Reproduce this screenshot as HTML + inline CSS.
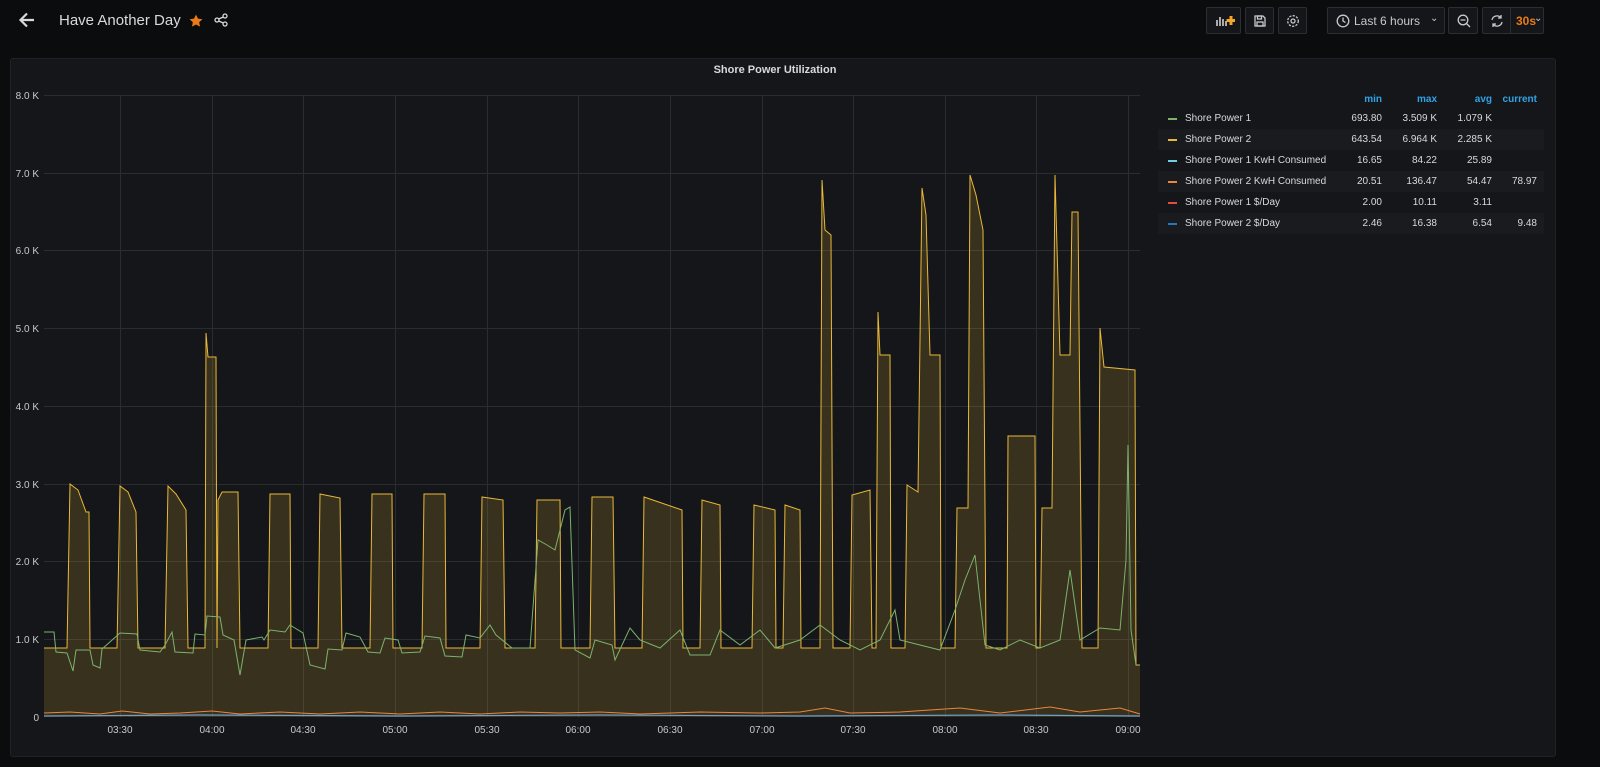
<!DOCTYPE html>
<html><head><meta charset="utf-8"><style>
*{margin:0;padding:0;box-sizing:border-box}
body{width:1600px;height:767px;background:#0b0c0e;font-family:"Liberation Sans",sans-serif;color:#d8d9da;overflow:hidden;position:relative}
.btn{position:absolute;top:7px;height:27px;border:1px solid #2c2e33;background:#141619;border-radius:2px}
.panel{position:absolute;left:10px;top:58px;width:1546px;height:699px;background:#141619;border:1px solid #202226;border-radius:3px}
.leg{position:absolute;left:1158px;font-size:10px;width:386px;height:21px;line-height:21px}
.leg span{position:absolute;text-align:right}
.leg .n{left:27px;text-align:left}
.leg i{position:absolute;left:10px;top:10px;width:9px;height:1.5px}
.alt{background:#191b1f}
</style></head><body>
<svg style="position:absolute;left:18px;top:11px" width="18" height="18" viewBox="0 0 18 18"><path d="M16 9H3M9 2.5L2.5 9 9 15.5" stroke="#d8d9da" stroke-width="2.2" fill="none"/></svg>
<div style="position:absolute;left:59px;top:12px;font-size:15px;color:#d8d9da">Have Another Day</div>
<svg style="position:absolute;left:189px;top:14px" width="14" height="14" viewBox="0 0 24 24"><path d="M12 1l3.4 7 7.6.9-5.6 5.2 1.5 7.6L12 18l-6.9 3.7 1.5-7.6L1 8.9 8.6 8z" fill="#eb7b18"/></svg>
<svg style="position:absolute;left:214px;top:13px" width="14" height="14" viewBox="0 0 14 14" fill="none" stroke="#d8d9da" stroke-width="1.3"><circle cx="3" cy="7" r="2"/><circle cx="11" cy="3" r="2"/><circle cx="11" cy="11" r="2"/><path d="M4.8 6l4.4-2M4.8 8l4.4 2"/></svg>
<div class="btn" style="left:1206px;width:35px"><svg style="position:absolute;left:8px;top:6px" width="20" height="14"><rect x="1" y="6" width="2" height="6" fill="#aaa"/><rect x="4" y="3" width="2" height="9" fill="#aaa"/><rect x="7" y="5" width="2" height="7" fill="#aaa"/><rect x="10" y="7" width="2" height="5" fill="#aaa"/><path d="M16 2v9M11.5 6.5h9" stroke="#f5a623" stroke-width="3"/></svg></div>
<div class="btn" style="left:1245px;width:29px"><svg style="position:absolute;left:7px;top:6px" width="14" height="14" fill="none" stroke="#c8c9ca" stroke-width="1.3"><path d="M2 2h8l2 2v8H2z"/><rect x="4.5" y="2" width="4" height="3"/><rect x="4" y="8" width="6" height="4"/></svg></div>
<div class="btn" style="left:1278px;width:29px"><svg style="position:absolute;left:7px;top:6px" width="14" height="14" fill="none" stroke="#c8c9ca" stroke-width="1.3"><circle cx="7" cy="7" r="2"/><circle cx="7" cy="7" r="5.3" stroke-dasharray="2.2 1.3"/></svg></div>
<div class="btn" style="left:1327px;width:118px"><svg style="position:absolute;left:8px;top:6px" width="14" height="14" fill="none" stroke="#c8c9ca" stroke-width="1.3"><circle cx="7" cy="7" r="5.8"/><path d="M7 3.5V7l2.5 1.5"/></svg><span style="position:absolute;left:26px;top:6px;font-size:12px;color:#c8c9ca">Last 6 hours</span><span style="position:absolute;left:102px;top:5px;font-size:10px;color:#c8c9ca">⌄</span></div>
<div class="btn" style="left:1448px;width:30px"><svg style="position:absolute;left:8px;top:6px" width="14" height="14" fill="none" stroke="#c8c9ca" stroke-width="1.3"><circle cx="6" cy="6" r="4.8"/><path d="M3.5 6h5M9.5 9.5l3.5 3.5"/></svg></div>
<div class="btn" style="left:1482px;width:62px"><svg style="position:absolute;left:7px;top:6px" width="14" height="14" fill="none" stroke="#c8c9ca" stroke-width="1.3"><path d="M2 6a5 5 0 0 1 9-2M12 8a5 5 0 0 1-9 2M11 1v3H8M3 13v-3h3"/></svg><div style="position:absolute;left:27px;top:0;width:1px;height:25px;background:#2c2e33"></div><span style="position:absolute;left:33px;top:6px;font-size:12px;font-weight:bold;color:#eb7b18">30s</span><span style="position:absolute;left:51px;top:5px;font-size:10px;color:#c8c9ca">⌄</span></div>
<div class="panel"></div>
<div style="position:absolute;left:10px;top:64px;width:1530px;text-align:center;font-size:11px;font-weight:bold;color:#d8d9da">Shore Power Utilization</div>
<svg style="position:absolute;left:0;top:0" width="1160" height="767">
<g stroke="#2a2c30" stroke-width="1">
<path d="M44 95.5H1140M44 173.5H1140M44 250.5H1140M44 328.5H1140M44 406.5H1140M44 484.5H1140M44 561.5H1140M44 639.5H1140"/>
<path d="M120.5 95V717M212.5 95V717M303.5 95V717M395.5 95V717M487.5 95V717M578.5 95V717M670.5 95V717M762.5 95V717M853.5 95V717M945.5 95V717M1036.5 95V717M1128.5 95V717"/>
</g>
<g font-size="10" fill="#c8c9ca" text-anchor="end">
<text x="39" y="99">8.0 K</text><text x="39" y="177">7.0 K</text><text x="39" y="254">6.0 K</text><text x="39" y="332">5.0 K</text><text x="39" y="410">4.0 K</text><text x="39" y="488">3.0 K</text><text x="39" y="565">2.0 K</text><text x="39" y="643">1.0 K</text><text x="39" y="721">0</text>
</g>
<g font-size="10" fill="#c8c9ca" text-anchor="middle">
<text x="120" y="733">03:30</text><text x="212" y="733">04:00</text><text x="303" y="733">04:30</text><text x="395" y="733">05:00</text><text x="487" y="733">05:30</text><text x="578" y="733">06:00</text><text x="670" y="733">06:30</text><text x="762" y="733">07:00</text><text x="853" y="733">07:30</text><text x="945" y="733">08:00</text><text x="1036" y="733">08:30</text><text x="1128" y="733">09:00</text>
</g>
<path fill="rgba(234,184,57,0.17)" stroke="none" d="M44,717 L44,648 L67,648 L70,484 L78,490 L86,512 L89,512 L90,648 L117,648 L120,486 L128,492 L136,512 L138,648 L165,648 L168,486 L176,494 L186,510 L188,648 L205,648 L206,333 L208,357 L216,357 L217,648 L218,500 L222,492 L238,492 L240,648 L268,648 L270,494 L290,494 L291,648 L318,648 L320,494 L340,498 L342,648 L370,648 L372,494 L392,494 L393,648 L422,648 L424,494 L445,494 L446,648 L480,648 L482,497 L503,500 L505,648 L535,648 L537,500 L560,500 L561,648 L590,648 L592,497 L613,497 L615,648 L642,648 L644,497 L682,510 L683,648 L700,648 L702,500 L720,505 L721,648 L752,648 L754,505 L775,510 L776,648 L783,648 L785,505 L800,510 L801,648 L820,648 L822,180 L825,230 L831,235 L833,648 L850,648 L852,495 L870,490 L872,648 L876,648 L878,312 L880,355 L890,355 L891,648 L905,648 L907,485 L918,492 L922,188 L926,215 L930,355 L940,355 L941,648 L955,648 L957,508 L968,508 L970,175 L976,195 L983,230 L986,648 L1007,648 L1008,436 L1035,436 L1036,648 L1040,648 L1042,508 L1052,508 L1055,175 L1060,355 L1070,355 L1072,212 L1078,212 L1082,648 L1098,648 L1100,328 L1104,367 L1135,370 L1136,665 L1140,665 L1140,717Z"/>
<path fill="none" stroke="#eab839" stroke-width="1" d="M44,648 L67,648 L70,484 L78,490 L86,512 L89,512 L90,648 L117,648 L120,486 L128,492 L136,512 L138,648 L165,648 L168,486 L176,494 L186,510 L188,648 L205,648 L206,333 L208,357 L216,357 L217,648 L218,500 L222,492 L238,492 L240,648 L268,648 L270,494 L290,494 L291,648 L318,648 L320,494 L340,498 L342,648 L370,648 L372,494 L392,494 L393,648 L422,648 L424,494 L445,494 L446,648 L480,648 L482,497 L503,500 L505,648 L535,648 L537,500 L560,500 L561,648 L590,648 L592,497 L613,497 L615,648 L642,648 L644,497 L682,510 L683,648 L700,648 L702,500 L720,505 L721,648 L752,648 L754,505 L775,510 L776,648 L783,648 L785,505 L800,510 L801,648 L820,648 L822,180 L825,230 L831,235 L833,648 L850,648 L852,495 L870,490 L872,648 L876,648 L878,312 L880,355 L890,355 L891,648 L905,648 L907,485 L918,492 L922,188 L926,215 L930,355 L940,355 L941,648 L955,648 L957,508 L968,508 L970,175 L976,195 L983,230 L986,648 L1007,648 L1008,436 L1035,436 L1036,648 L1040,648 L1042,508 L1052,508 L1055,175 L1060,355 L1070,355 L1072,212 L1078,212 L1082,648 L1098,648 L1100,328 L1104,367 L1135,370 L1136,665 L1140,665"/>
<path fill="none" stroke="#7eb26d" stroke-width="1" d="M44,632 L54,632 L56,652 L67,653 L73,671 L76,650 L90,650 L93,665 L100,668 L102,649 L120,633 L137,634 L140,650 L160,652 L165,645 L172,632 L175,652 L193,653 L195,634 L205,635 L207,616 L220,617 L223,635 L234,640 L240,675 L246,640 L262,637 L264,640 L270,630 L285,632 L290,625 L303,633 L310,665 L325,669 L328,649 L342,650 L346,633 L360,637 L368,652 L380,653 L385,638 L398,640 L402,653 L420,652 L425,636 L440,638 L445,656 L462,657 L466,635 L480,638 L490,625 L496,635 L512,648 L530,648 L538,540 L547,545 L555,550 L565,510 L570,507 L575,650 L590,658 L595,640 L612,645 L615,660 L630,628 L640,640 L660,648 L680,630 L690,655 L710,655 L720,630 L740,645 L760,630 L775,648 L800,640 L820,625 L840,640 L860,650 L880,640 L895,610 L900,640 L920,645 L940,650 L955,610 L965,580 L975,555 L985,645 L1000,650 L1020,640 L1040,648 L1060,640 L1070,570 L1080,640 L1100,628 L1120,630 L1126,560 L1128,445 L1131,630 L1136,665"/>
<path fill="none" stroke="#ef843c" stroke-width="1" d="M44,713 L70,712 L100,714 L122,711 L150,714 L180,713 L212,711 L240,714 L280,712 L320,714 L360,712 L400,714 L440,712 L480,714 L520,712 L560,713 L600,712 L640,714 L700,712 L760,713 L800,712 L825,708 L850,713 L900,712 L960,708 L1000,713 L1050,707 L1080,712 L1120,708 L1140,714"/>
<path fill="none" stroke="#6d9fcf" stroke-width="1.2" d="M44,716 L200,715 L400,716 L600,715 L800,716 L1000,715 L1140,716"/>
</svg>
<div style="position:absolute;left:1158px;top:94px;width:386px;font-size:10px;font-weight:bold;color:#33a2e5;height:14px">
<span style="position:absolute;right:162px">min</span><span style="position:absolute;right:107px">max</span><span style="position:absolute;right:52px">avg</span><span style="position:absolute;right:7px">current</span></div>
<div class="leg" style="top:108px"><i style="background:#7eb26d"></i><span class="n">Shore Power 1</span><span style="right:162px">693.80</span><span style="right:107px">3.509 K</span><span style="right:52px">1.079 K</span></div>
<div class="leg alt" style="top:129px"><i style="background:#eab839"></i><span class="n">Shore Power 2</span><span style="right:162px">643.54</span><span style="right:107px">6.964 K</span><span style="right:52px">2.285 K</span></div>
<div class="leg" style="top:150px"><i style="background:#6ed0e0"></i><span class="n">Shore Power 1 KwH Consumed</span><span style="right:162px">16.65</span><span style="right:107px">84.22</span><span style="right:52px">25.89</span></div>
<div class="leg alt" style="top:171px"><i style="background:#ef843c"></i><span class="n">Shore Power 2 KwH Consumed</span><span style="right:162px">20.51</span><span style="right:107px">136.47</span><span style="right:52px">54.47</span><span style="right:7px">78.97</span></div>
<div class="leg" style="top:192px"><i style="background:#e24d42"></i><span class="n">Shore Power 1 $/Day</span><span style="right:162px">2.00</span><span style="right:107px">10.11</span><span style="right:52px">3.11</span></div>
<div class="leg alt" style="top:213px"><i style="background:#1f78c1"></i><span class="n">Shore Power 2 $/Day</span><span style="right:162px">2.46</span><span style="right:107px">16.38</span><span style="right:52px">6.54</span><span style="right:7px">9.48</span></div>
</body></html>
